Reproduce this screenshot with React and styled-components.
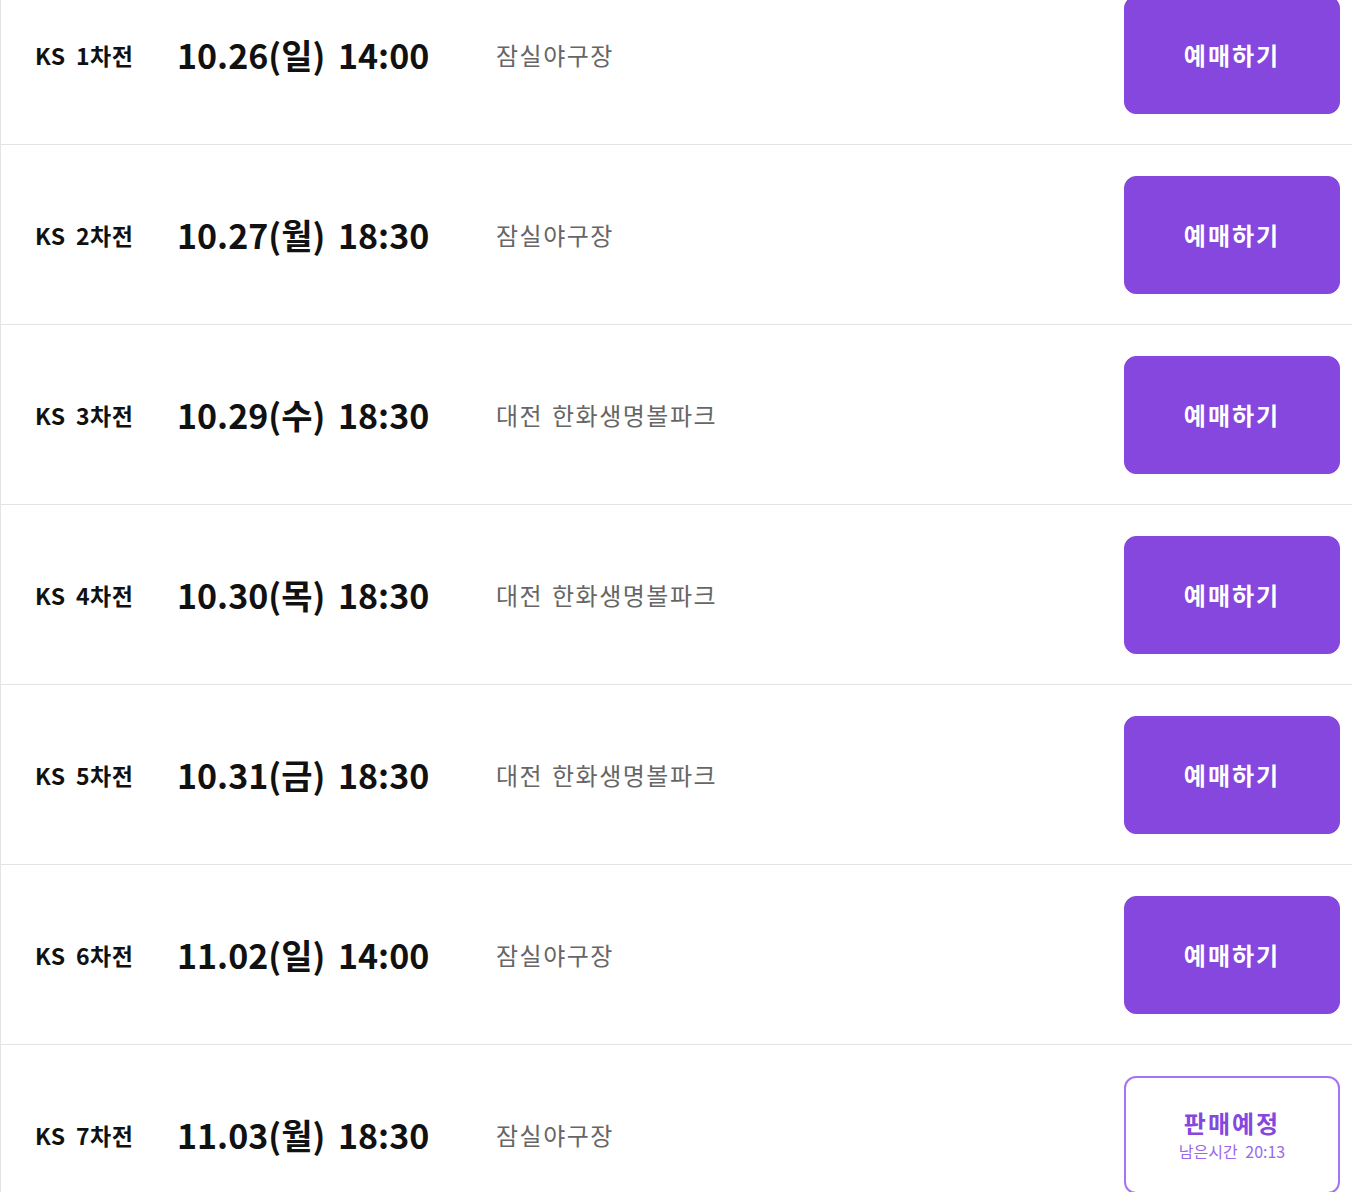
import React from "react";
import styled, { createGlobalStyle } from "styled-components";

const GlobalStyle = createGlobalStyle`
  html, body {
    margin: 0;
    padding: 0;
    background: #ffffff;
    overflow: hidden;
  }
  body {
    font-family: "Noto Sans CJK KR", "Noto Sans", sans-serif;
    color: #111111;
  }
`;

const List = styled.ul`
  list-style: none;
  margin: -35px 0 0 0;
  padding: 0;
  width: 1360px;
  border-left: 1px solid #e3e3e3;
`;

const Row = styled.li`
  box-sizing: border-box;
  height: 180px;
  display: flex;
  align-items: center;
  padding-left: 34px;
  border-bottom: 1px solid #e3e3e3;
`;

const Round = styled.span`
  width: 142px;
  font-size: 23px;
  font-weight: 700;
  letter-spacing: 0.4px;
  word-spacing: 5px;
  color: #111111;
`;

const GameTime = styled.span`
  width: 319px;
  font-size: 34px;
  font-weight: 700;
  letter-spacing: 0;
  word-spacing: 5px;
  color: #111111;
`;

const Stadium = styled.span`
  flex: 1;
  font-size: 24px;
  font-weight: 400;
  letter-spacing: 1.5px;
  word-spacing: 2px;
  color: #666666;
`;

const TicketButton = styled.button`
  box-sizing: border-box;
  width: 216px;
  height: 118px;
  margin-right: 21px;
  border-radius: 12px;
  border: ${(p) => (p.$upcoming ? "2px solid #a674f0" : "1px solid #8547de")};
  background: ${(p) => (p.$upcoming ? "#ffffff" : "#8547de")};
  color: ${(p) => (p.$upcoming ? "#8547de" : "#ffffff")};
  font-family: inherit;
  display: flex;
  flex-direction: column;
  align-items: center;
  justify-content: center;
  cursor: pointer;
  padding: 0;
`;

const ButtonLabel = styled.span`
  display: block;
  font-size: 24px;
  font-weight: 700;
  letter-spacing: 2px;
  line-height: 28px;
`;

const Countdown = styled.span`
  display: block;
  margin-top: 4px;
  font-size: 16px;
  font-weight: 400;
  color: #9a68ea;
  line-height: 20px;
  word-spacing: 4px;
`;

const games = [
  { round: "KS 1차전", date: "10.26(일) 14:00", place: "잠실야구장" },
  { round: "KS 2차전", date: "10.27(월) 18:30", place: "잠실야구장" },
  { round: "KS 3차전", date: "10.29(수) 18:30", place: "대전 한화생명볼파크" },
  { round: "KS 4차전", date: "10.30(목) 18:30", place: "대전 한화생명볼파크" },
  { round: "KS 5차전", date: "10.31(금) 18:30", place: "대전 한화생명볼파크" },
  { round: "KS 6차전", date: "11.02(일) 14:00", place: "잠실야구장" },
  { round: "KS 7차전", date: "11.03(월) 18:30", place: "잠실야구장", upcoming: "20:13" },
];

const App = () => {
  return (
    <>
      <GlobalStyle />
      <List>
        {games.map((g) => (
          <Row key={g.round}>
            <Round>{g.round}</Round>
            <GameTime>{g.date}</GameTime>
            <Stadium>{g.place}</Stadium>
            {g.upcoming ? (
              <TicketButton $upcoming>
                <ButtonLabel>판매예정</ButtonLabel>
                <Countdown>남은시간 {g.upcoming}</Countdown>
              </TicketButton>
            ) : (
              <TicketButton>
                <ButtonLabel>예매하기</ButtonLabel>
              </TicketButton>
            )}
          </Row>
        ))}
      </List>
    </>
  );
};

export default App;
